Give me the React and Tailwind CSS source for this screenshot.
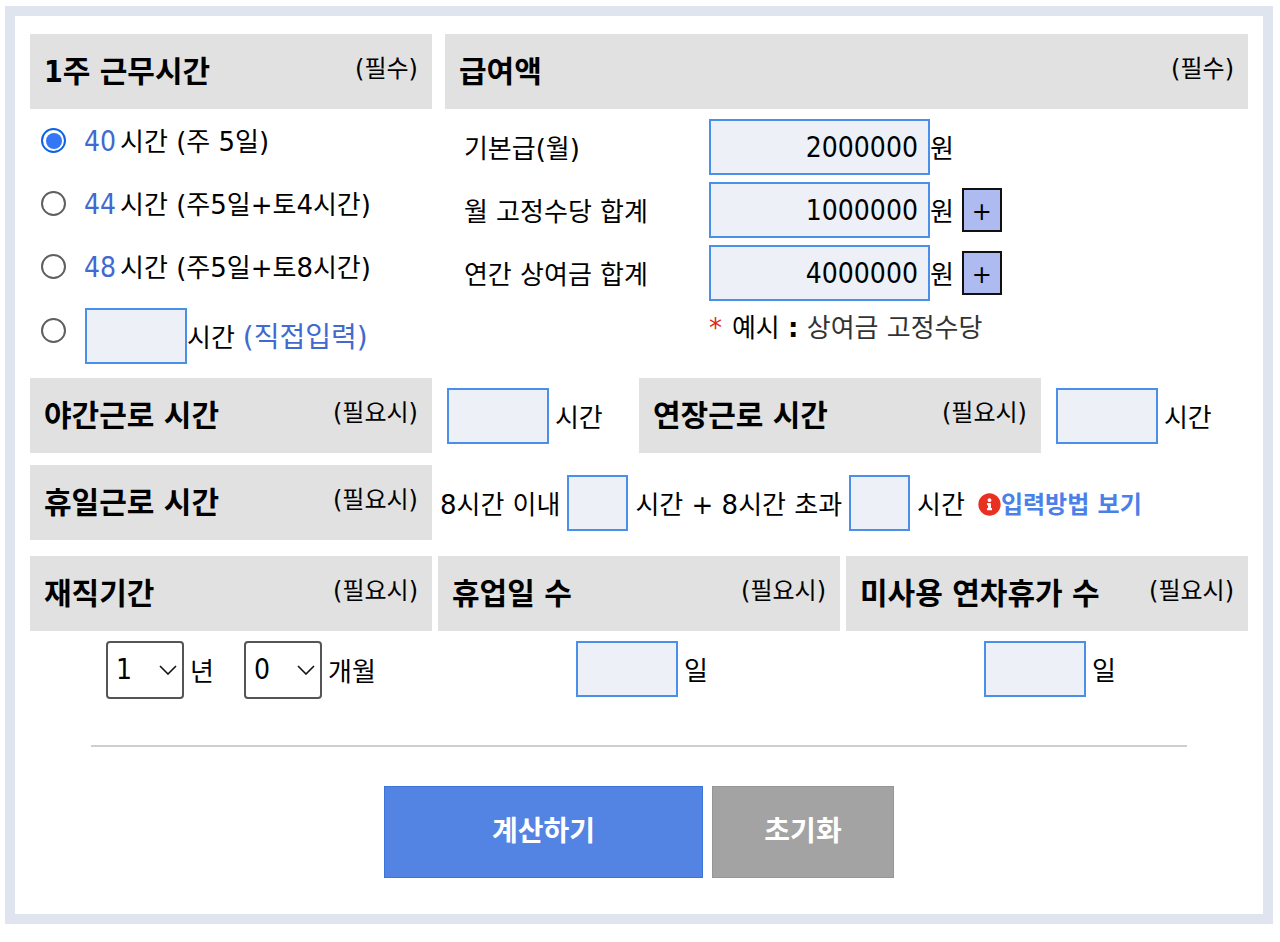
import React, { useState } from 'react';
import { FaInfoCircle } from 'react-icons/fa';

const fieldClass =
  "h-14 border-2 border-[#4a90ea] bg-[#edf0f6] px-[10px] pt-[2px] text-right font-['DejaVu_Sans_Condensed','Noto_Sans_CJK_KR',sans-serif] text-[28px] text-black outline-none";

const SectionHeader = ({ title, note, className = '' }) => (
  <div className={`flex h-[75px] items-center justify-between bg-[#e1e1e1] px-[14px] ${className}`}>
    <h2 className="font-['DejaVu_Sans_Condensed','Noto_Sans_CJK_KR',sans-serif] text-[30px] leading-9 font-bold">
      {title}
    </h2>
    <span className="pb-[6px] text-2xl leading-8">{note}</span>
  </div>
);

const Radio = ({ id, value, selected, onSelect, label }) => (
  <input
    type="radio"
    name="weekHours"
    id={id}
    value={value}
    aria-label={label}
    checked={selected === value}
    onChange={() => onSelect(value)}
    className="grid size-[25px] shrink-0 appearance-none place-items-center rounded-full border-2 border-[#5f5f5f] bg-white before:size-4 before:rounded-full checked:border-[#0f62e0] checked:before:bg-[#3377f6]"
  />
);

const PeriodSelect = ({ id, label, value, onChange, max }) => (
  <span className="relative inline-flex">
    <select
      id={id}
      aria-label={label}
      value={value}
      onChange={(e) => onChange(e.target.value)}
      className="h-[58px] w-[78px] appearance-none rounded-[4px] border-2 border-[#555] bg-white pl-2 font-['DejaVu_Sans_Condensed','Noto_Sans_CJK_KR',sans-serif] text-[28px] text-black"
    >
      {Array.from({ length: max + 1 }, (_, i) => (
        <option key={i} value={i}>{i}</option>
      ))}
    </select>
    <svg
      className="pointer-events-none absolute top-6 right-[7px] h-[10px] w-[18px]"
      viewBox="0 0 18 10"
      fill="none"
      stroke="#111"
      strokeWidth="1.6"
    >
      <path d="M1 1l8 8 8-8" />
    </svg>
  </span>
);

const weekOptions = [
  { value: '40', text: '시간 (주 5일)' },
  { value: '44', text: '시간 (주5일+토4시간)' },
  { value: '48', text: '시간 (주5일+토8시간)' },
];

const payRows = [
  { key: 'base', label: '기본급(월)', addable: false },
  { key: 'allowance', label: '월 고정수당 합계', addable: true },
  { key: 'bonus', label: '연간 상여금 합계', addable: true },
];

const App = () => {
  const [week, setWeek] = useState('40');
  const [pay, setPay] = useState({ base: '2000000', allowance: '1000000', bonus: '4000000' });
  const [years, setYears] = useState('1');
  const [months, setMonths] = useState('0');

  return (
    <div className="bg-white pt-[6px] pr-[7px] pb-5 pl-[5px] font-['DejaVu_Sans','Noto_Sans_CJK_KR',sans-serif] text-[26px] leading-9 text-black">
      <form
        className="border-[10px] border-[#e0e4ef] px-[15px] pt-[18px] pb-9 whitespace-nowrap"
        onSubmit={(e) => e.preventDefault()}
      >
        {/* Weekly hours and pay */}
        <div className="flex gap-[13px]">
          <section className="w-[33%] shrink-0">
            <SectionHeader title="1주 근무시간" note="(필수)" />
            <div className="pl-[11px]">
              {weekOptions.map((option) => (
                <div key={option.value} className="flex h-[63px] items-center gap-[18px]">
                  <Radio id={`week-${option.value}`} value={option.value} selected={week} onSelect={setWeek} />
                  <label htmlFor={`week-${option.value}`} className="flex items-baseline gap-1 pt-[2px]">
                    <span className="font-['DejaVu_Sans_Condensed',sans-serif] text-[28px] text-[#4169cf]">
                      {option.value}
                    </span>
                    <span>{option.text}</span>
                  </label>
                </div>
              ))}
              <div className="flex items-start gap-[19px] pt-[10px]">
                <div className="flex h-11 items-center">
                  <Radio id="week-custom" value="custom" selected={week} onSelect={setWeek} label="직접입력" />
                </div>
                <div className="flex items-center">
                  <input id="custom-hours" aria-label="1주 근무시간" className={`${fieldClass} w-[102px]`} />
                  <label htmlFor="custom-hours" className="pt-1">시간</label>
                  <label htmlFor="week-custom" className="pt-1 pl-2 text-[28px] text-[#4169cf]">(직접입력)</label>
                </div>
              </div>
            </div>
          </section>

          <section className="min-w-0 flex-1">
            <SectionHeader title="급여액" note="(필수)" />
            <div className="pt-[6px] pl-[19px]">
              {payRows.map((row) => (
                <div key={row.key} className="flex h-[63px] items-center">
                  <label htmlFor={row.key} className="w-[245px] pt-1">{row.label}</label>
                  <input
                    id={row.key}
                    value={pay[row.key]}
                    onChange={(e) => setPay({ ...pay, [row.key]: e.target.value })}
                    className={`${fieldClass} w-[221px]`}
                  />
                  <span className="pt-1">원</span>
                  {row.addable && (
                    <button
                      type="button"
                      aria-label={`${row.label} 추가`}
                      className="ml-2 flex h-11 w-10 items-center justify-center border-2 border-[#111] bg-[#aebbf1] pt-1 text-2xl"
                    >
                      +
                    </button>
                  )}
                </div>
              ))}
              <p className="flex h-12 items-center gap-[10px] pl-[245px]">
                <span className="text-[#e0281c]">*</span>
                <span>
                  예시 <b>:</b> <span className="text-[#333]">상여금 고정수당</span>
                </span>
              </p>
            </div>
          </section>
        </div>

        {/* Night and overtime hours */}
        <div className="mt-[14px] flex items-center">
          <SectionHeader title="야간근로 시간" note="(필요시)" className="w-[33%] shrink-0" />
          <div className="flex w-[17%] items-center gap-[6px] pl-[15px]">
            <input id="night" className={`${fieldClass} w-[102px]`} />
            <label htmlFor="night" className="pt-1">시간</label>
          </div>
          <SectionHeader title="연장근로 시간" note="(필요시)" className="w-[33%] shrink-0" />
          <div className="flex items-center gap-[6px] pl-[15px]">
            <input id="overtime" className={`${fieldClass} w-[102px]`} />
            <label htmlFor="overtime" className="pt-1">시간</label>
          </div>
        </div>

        {/* Holiday hours */}
        <div className="mt-3 flex items-center">
          <SectionHeader title="휴일근로 시간" note="(필요시)" className="w-[33%] shrink-0" />
          <div className="flex items-center gap-[7px] pl-2">
            <label htmlFor="holiday-within" className="pt-1">8시간 이내</label>
            <input id="holiday-within" className={`${fieldClass} w-[61px]`} />
            <label htmlFor="holiday-over" className="pt-1">시간 + 8시간 초과</label>
            <input id="holiday-over" className={`${fieldClass} w-[61px]`} />
            <span className="pt-1">시간</span>
            <a href="#guide" className="flex items-center pt-1 pl-[6px] text-2xl font-bold text-[#4a80e8]">
              <FaInfoCircle className="size-[23px] text-[#e83023]" />
              입력방법 보기
            </a>
          </div>
        </div>

        {/* Employment period, closed days, unused leave */}
        <div className="mt-4 grid grid-cols-3 gap-x-[6px]">
          <section>
            <SectionHeader title="재직기간" note="(필요시)" />
            <div className="flex items-center justify-center gap-[6px] pt-[10px] pl-5">
              <PeriodSelect id="years" label="년" value={years} onChange={setYears} max={30} />
              <label htmlFor="years" className="pt-1 pr-6">년</label>
              <PeriodSelect id="months" label="개월" value={months} onChange={setMonths} max={11} />
              <label htmlFor="months" className="pt-1">개월</label>
            </div>
          </section>
          <section>
            <SectionHeader title="휴업일 수" note="(필요시)" />
            <div className="flex items-center justify-center gap-[6px] pt-[10px] pl-[6px]">
              <input id="closed-days" className={`${fieldClass} w-[102px]`} />
              <label htmlFor="closed-days" className="pt-1">일</label>
            </div>
          </section>
          <section>
            <SectionHeader title="미사용 연차휴가 수" note="(필요시)" />
            <div className="flex items-center justify-center gap-[6px] pt-[10px] pl-[6px]">
              <input id="unused-leave" className={`${fieldClass} w-[102px]`} />
              <label htmlFor="unused-leave" className="pt-1">일</label>
            </div>
          </section>
        </div>

        <hr className="mx-auto mt-[46px] w-[90%] border-t-2 border-[#cfcfcf]" />

        <div className="mt-[39px] flex justify-center gap-[9px]">
          <button type="submit" className="h-[92px] w-[319px] border border-[#3d74d8] bg-[#5384e4] text-[28px] font-bold text-white">
            계산하기
          </button>
          <button type="reset" className="h-[92px] w-[182px] border border-[#969696] bg-[#a3a3a3] text-[28px] font-bold text-white">
            초기화
          </button>
        </div>
      </form>
    </div>
  );
};

export default App;
